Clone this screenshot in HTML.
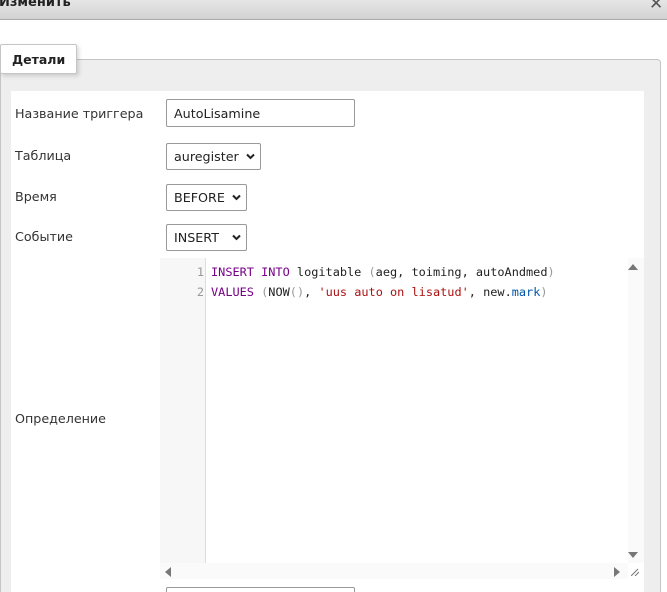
<!DOCTYPE html>
<html style="overflow:hidden;height:592px"><head><meta charset="utf-8"><style>
*{box-sizing:border-box}
body{margin:0;width:667px;height:592px;overflow:hidden;background:#fff;font-family:"DejaVu Sans",Verdana,sans-serif;font-size:12.7px;color:#333;position:relative}
.title{position:absolute;left:0;top:0;width:667px;height:20px;background:linear-gradient(#e6e6e6,#d2d2d2);border-bottom:1px solid #aaa;overflow:hidden}
.t{position:absolute;left:-1px;top:-5px;font-weight:bold;font-size:13px;color:#222}
.x{position:absolute;left:649px;top:-6px;font-size:17px;color:#555}
.panel{position:absolute;left:0;top:59px;width:661px;height:540px;background:#eee;border:1px solid #c5c5c5;border-radius:0 4px 0 0}
.tab{position:absolute;left:0;top:44px;width:77px;height:30px;background:#fff;border:1px solid #c5c5c5;border-radius:2px;box-shadow:2px 2px 4px rgba(0,0,0,.15);font-weight:bold;font-size:12.5px;color:#222;padding:7px 0 0 11px}
.inner{position:absolute;left:11px;top:91px;width:633px;height:510px;background:#fff}
.lbl{position:absolute;left:15px;font-size:12.7px;color:#333}
.ctl{position:absolute;left:166px;height:27px;border:1px solid #999;border-radius:2px;background:#fff;font-size:12.7px;color:#222;padding:5px 0 0 7px}
.ctl svg{position:absolute;right:5px;top:9px}
.ed{position:absolute;left:160px;top:258px;width:484px;height:322px;background:#fff}
.gut{position:absolute;left:0;top:0;width:46px;height:305px;background:#f7f7f7;border-right:1px solid #ddd}
.code{position:absolute;left:0;top:4px;font-family:"DejaVu Sans Mono",monospace;font-size:11.9px;line-height:20px;white-space:pre;color:#222}
.n{display:inline-block;width:51px;text-align:right;color:#999;padding-right:7px}
.k{color:#708}.s{color:#a11}.p{color:#999}.v{color:#05a}
.hs{position:absolute;left:0;top:305px;width:468px;height:16px;background:#fafafa}
</style></head><body>
<div class="title"><span class="t">Изменить</span><span class="x">✕</span></div>
<div class="panel"></div>
<div class="tab">Детали</div>
<div class="inner"></div>
<div class="lbl" style="top:106px">Название триггера</div>
<div class="ctl" style="top:99px;width:189px;height:28px;padding-top:6px">AutoLisamine</div>
<div class="lbl" style="top:148px">Таблица</div>
<div class="ctl" style="top:143px;width:95px">auregister<svg width="9" height="7" viewBox="0 0 9 7"><path d="M1 1.5L4.5 5L8 1.5" stroke="#222" stroke-width="2" fill="none"/></svg></div>
<div class="lbl" style="top:189px">Время</div>
<div class="ctl" style="top:184px;width:81px">BEFORE<svg width="9" height="7" viewBox="0 0 9 7"><path d="M1 1.5L4.5 5L8 1.5" stroke="#222" stroke-width="2" fill="none"/></svg></div>
<div class="lbl" style="top:229px">Событие</div>
<div class="ctl" style="top:224px;width:81px">INSERT<svg width="9" height="7" viewBox="0 0 9 7"><path d="M1 1.5L4.5 5L8 1.5" stroke="#222" stroke-width="2" fill="none"/></svg></div>
<div class="lbl" style="top:411px">Определение</div>
<div class="ed">
<div class="gut"></div>
<div class="code"><span class="n">1</span><span class="k">INSERT INTO</span> logitable <span class="p">(</span>aeg, toiming, autoAndmed<span class="p">)</span>
<span class="n">2</span><span class="k">VALUES</span> <span class="p">(</span>NOW<span class="p">()</span>, <span class="s">'uus auto on lisatud'</span>, new.<span class="v">mark</span><span class="p">)</span></div>
<div class="hs"></div>
<div style="position:absolute;left:468px;top:0;width:16px;height:305px;background:#fafafa"></div>
<svg style="position:absolute;left:468px;top:5px" width="10" height="8"><path d="M0 7L5 1L10 7Z" fill="#777"/></svg>
<svg style="position:absolute;left:468px;top:293px" width="10" height="8"><path d="M0 1L5 7L10 1Z" fill="#777"/></svg>
<svg style="position:absolute;left:4px;top:309px" width="8" height="10"><path d="M7 0L1 5L7 10Z" fill="#777"/></svg>
<svg style="position:absolute;left:453px;top:309px" width="8" height="10"><path d="M1 0L7 5L1 10Z" fill="#777"/></svg>
<svg style="position:absolute;left:471px;top:310px" width="8" height="8"><path d="M0 8L7 1M4 8L8 4" stroke="#777" stroke-width="1" fill="none"/></svg>
</div>
<div class="ctl" style="top:587px;width:189px"></div>
</body></html>
